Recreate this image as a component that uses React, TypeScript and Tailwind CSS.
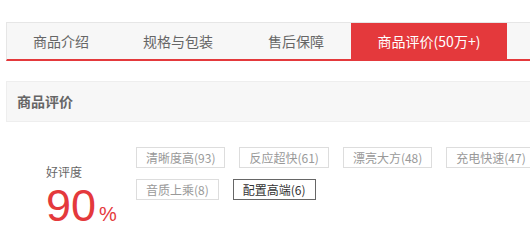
import React from 'react';

const tabs = [
  { label: '商品介绍', w: 'w-[108px]' },
  { label: '规格与包装', w: 'w-[126px]' },
  { label: '售后保障', w: 'w-[110px]' },
  { label: '商品评价(50万+)', w: 'w-[156px]', active: true },
];

const tags = [
  { label: '清晰度高(93)' },
  { label: '反应超快(61)' },
  { label: '漂亮大方(48)' },
  { label: '充电快速(47)' },
  { label: '音质上乘(8)' },
  { label: '配置高端(6)', active: true },
];

export default function App() {
  return (
    <div
      className="w-[530px] h-[251px] overflow-hidden bg-white"
      style={{ fontFamily: '"Noto Sans CJK SC", "Noto Sans", sans-serif' }}
    >
      <div className="w-[990px] ml-[6px] pt-[22px]">
        {/* Tabs */}
        <div className="flex h-[39px] border-t border-l border-[#e6e6e6] border-b-2 border-b-[#e4393c] bg-[#f7f7f7]">
          {tabs.map((t) => (
            <div
              key={t.label}
              className={`${t.w} flex items-center justify-center text-[14px] ${
                t.active ? 'bg-[#e4393c] text-white' : 'text-[#666]'
              }`}
            >
              {t.label}
            </div>
          ))}
        </div>

        {/* Section header */}
        <div className="mt-[20px] h-[41px] border border-[#eee] bg-[#f7f7f7] flex items-center pl-[10px]">
          <span className="text-[14px] font-bold text-[#666]">商品评价</span>
        </div>

        {/* Rating body */}
        <div className="flex pl-[40px] pt-[25px]">
          <div className="w-[90px] pt-[17px]">
            <div className="text-[12px] leading-[16px] text-[#666]">好评度</div>
            <div
              className="mt-[3px] flex items-baseline text-[#e4393c]"
              style={{ fontFamily: '"Liberation Sans", Arial, sans-serif' }}
            >
              <span className="text-[45px] leading-none">90</span>
              <span className="text-[20px] leading-none ml-[3px]">%</span>
            </div>
          </div>
          <div className="w-[420px] flex flex-wrap gap-x-[14px] gap-y-[11px] content-start">
            {tags.map((t) => (
              <span
                key={t.label}
                className={`h-[21px] px-[9px] flex items-center border text-[12px] ${
                  t.active ? 'border-[#666] text-[#333]' : 'border-[#ddd] text-[#999]'
                }`}
              >
                {t.label}
              </span>
            ))}
          </div>
        </div>
      </div>
    </div>
  );
}
